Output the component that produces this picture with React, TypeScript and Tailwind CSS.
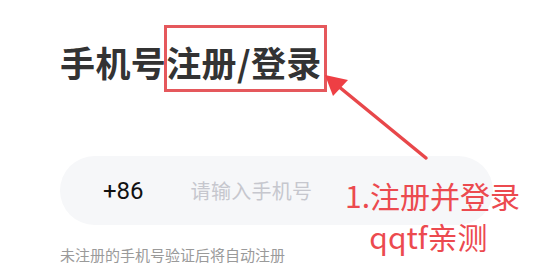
const cjk = "font-['Noto_Sans_CJK_SC','Noto_Sans',sans-serif]";

function Arrow() {
  return (
    <svg
      className="absolute left-0 top-0 pointer-events-none"
      width="550"
      height="275"
      viewBox="0 0 550 275"
    >
      <line x1="426" y1="158" x2="338" y2="86" stroke="#e8474a" strokeWidth="3.5" strokeLinecap="round" />
      <polygon points="325,75 348,80 333,96" fill="#ee3f44" />
    </svg>
  );
}

export default function App() {
  return (
    <div className={`relative w-[550px] h-[275px] bg-white overflow-hidden ${cjk}`}>
      <div className="pl-[60px] pt-[42px] w-[493px]">
        <h1 className="text-[35px] leading-[40px] font-bold text-[#333333] tracking-[0.4px]">
          手机号注册/登录
        </h1>
        <div className="mt-[74px] h-[69px] rounded-full bg-[#f6f7f9] flex items-center">
          <span className="ml-[43px] text-[24px] text-[#111111] font-['Roboto',sans-serif]">+86</span>
          <span className="ml-[47px] text-[20px] tracking-[0.3px] text-[#c6c7ce]">请输入手机号</span>
        </div>
        <p className="mt-[20px] text-[15px] leading-[20px] text-[#9a9a9a]">
          未注册的手机号验证后将自动注册
        </p>
      </div>

      {/* annotation overlays */}
      <div className="absolute left-[164px] top-[25px] w-[163px] h-[67px] border-[3px] border-[#e5585c]" />
      <Arrow />
      <div className="absolute left-[335px] top-[175px] w-[195px] text-center text-[30px] leading-[41px] text-[#ec4a4f]">
        <div>1.注册并登录</div>
        <div className="pr-[8px]">qqtf亲测</div>
      </div>
    </div>
  );
}
